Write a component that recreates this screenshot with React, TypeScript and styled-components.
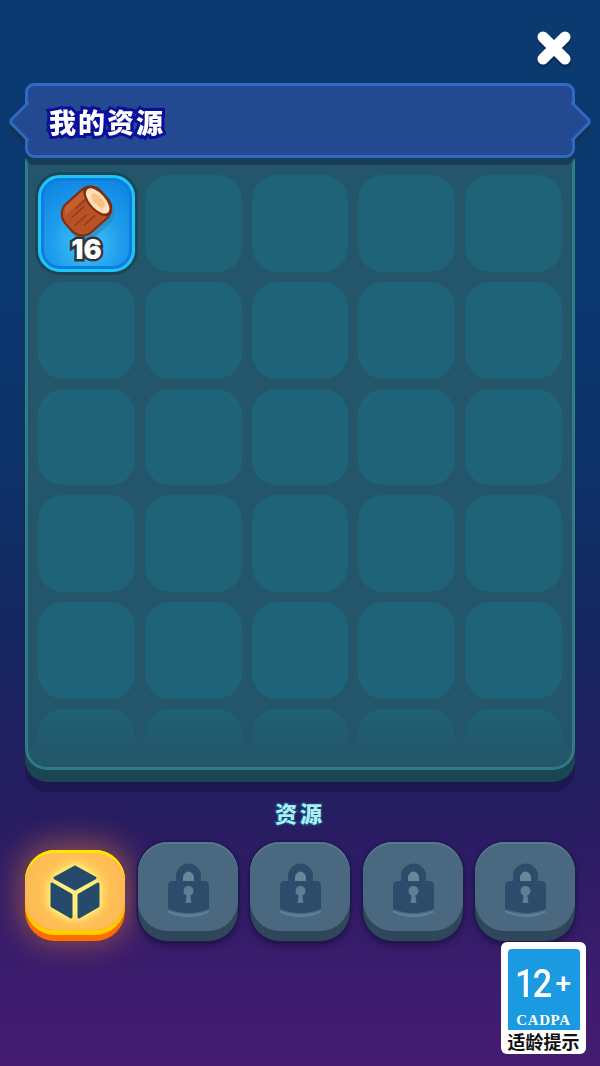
import React from "react";
import styled, { createGlobalStyle } from "styled-components";

const Global = createGlobalStyle`
  html, body { margin: 0; padding: 0; background: #1d1c5e; }
  * { box-sizing: border-box; }
`;

const CJK = `"Noto Sans CJK SC", "Noto Sans", sans-serif`;

const Screen = styled.div`
  position: relative;
  width: 600px;
  height: 1066px;
  overflow: hidden;
  display: flex;
  flex-direction: column;
  padding: 31px 25px 0;
  background: linear-gradient(180deg, #0a3a70 0%, #0a3970 25%, #0d3168 45%, #17255e 62%, #291c62 78%, #3a1c6c 90%, #441c72 100%);
`;

const TopBar = styled.div`
  display: flex;
  justify-content: flex-end;
  padding-right: 4px;
  height: 34px;
`;

const CloseIcon = styled.svg`
  width: 34px;
  height: 34px;
  overflow: visible;
  filter: drop-shadow(0 3px 0 #0b2a5a);
`;

const Banner = styled.div`
  position: relative;
  z-index: 2;
  height: 75px;
  margin-top: 18px;
  padding-left: 21px;
  display: flex;
  align-items: center;
  background: #234a90;
  border: 3px solid #2f6ac4;
  border-radius: 9px;
  filter: drop-shadow(0 7px 0 rgba(22, 50, 80, 0.72));

  &::before,
  &::after {
    content: "";
    position: absolute;
    top: 20.5px;
    width: 26px;
    height: 26px;
    background: #234a90;
    transform: rotate(45deg);
  }
  &::before {
    left: -15px;
    border-left: 3px solid #2f6ac4;
    border-bottom: 3px solid #2f6ac4;
    border-bottom-left-radius: 6px;
  }
  &::after {
    right: -15px;
    border-right: 3px solid #2f6ac4;
    border-top: 3px solid #2f6ac4;
    border-top-right-radius: 6px;
  }
`;

const Title = styled.h1`
  margin: 0;
  font: 900 27px/1 ${CJK};
  letter-spacing: 2px;
  color: #fff;
  -webkit-text-stroke: 6px #0a0f9c;
  paint-order: stroke fill;
  position: relative;
  top: 1px;
`;

const Panel = styled.section`
  position: relative;
  height: 624px;
  background: #1a4552;
  border-radius: 0 0 22px 22px;
  box-shadow: 0 10px 0 rgba(28, 22, 76, 0.75);
`;

const PanelFace = styled.div`
  position: relative;
  height: 612px;
  padding: 17px 10px 0;
  overflow: hidden;
  background: #23566a;
  border: 3px solid #2f7c82;
  border-top: 0;
  border-radius: 0 0 22px 22px;
`;

const Fade = styled.div`
  position: absolute;
  left: 0;
  right: 0;
  bottom: 0;
  height: 64px;
  background: linear-gradient(180deg, rgba(35, 86, 106, 0) 0%, rgba(35, 86, 106, 0.85) 68%, #23566a 100%);
`;

const Grid = styled.div`
  display: grid;
  grid-template-columns: repeat(5, 1fr);
  gap: 10px;
`;

const Slot = styled.div`
  position: relative;
  aspect-ratio: 1;
  border-radius: 25px;
  background: #1e6378;
`;

const FilledSlot = styled(Slot)`
  background: radial-gradient(circle at 50% 72%, #45c8f8 0%, #1f9cec 45%, #0b7fe0 100%);
  border: 3px solid #1ec6f6;
  border-radius: 22px;
  box-shadow: 0 0 0 3px #1c4558, inset 0 0 0 3px #0b7ce0;
`;

const LogIcon = styled.svg`
  position: absolute;
  left: -3px;
  top: -3px;
  width: 97px;
  height: 97px;
`;

const Count = styled.span`
  position: absolute;
  left: 0;
  right: 0;
  bottom: 6px;
  text-align: center;
  font: 900 27px/1 Inter, Roboto, sans-serif;
  color: #fff;
  -webkit-text-stroke: 5px #33343a;
  paint-order: stroke fill;
`;

const Label = styled.div`
  margin-top: 18px;
  height: 24px;
  text-align: center;
  font: 900 22px/24px ${CJK};
  letter-spacing: 3px;
  color: #a8f0f2;
  -webkit-text-stroke: 3px #1c3c78;
  paint-order: stroke fill;
`;

const Tabs = styled.div`
  margin-top: 18px;
  height: 99px;
  display: flex;
  justify-content: space-between;
  align-items: flex-end;
`;

const Tab = styled.button<{ $active?: boolean }>`
  width: 100px;
  height: ${(p) => (p.$active ? 91 : 99)}px;
  padding: 0;
  border: 0;
  display: flex;
  border-radius: 30px;
  background: ${(p) => (p.$active ? "#ff6c00" : "#30465a")};
  box-shadow: ${(p) =>
    p.$active
      ? "0 -3px 30px 6px rgba(255, 140, 50, 0.42)"
      : "0 0 0 1.5px #1d1a4c, 0 4px 6px rgba(15, 10, 50, 0.55)"};
`;

const TabFace = styled.span<{ $active?: boolean }>`
  flex: 1;
  height: ${(p) => (p.$active ? 80 : 89)}px;
  display: flex;
  align-items: center;
  justify-content: center;
  border-radius: 30px;
  ${(p) =>
    p.$active
      ? `background: radial-gradient(circle at 50% 50%, #ffd766 0%, #ffc057 55%, #ffb350 100%);
         box-shadow: inset 0 3px 0 #ffe600, 0 5px 0 #ffd000;`
      : `background: #4a6880; box-shadow: inset 0 2px 0 #577690;`}
`;

const CubeIcon = styled.svg`
  width: 52px;
  height: 58px;
  margin-top: 5px;
  filter: drop-shadow(0 0 5px #fff27a) drop-shadow(0 0 2px #fff27a);
`;

const LockIcon = styled.svg`
  width: 44px;
  height: 56px;
  margin-top: 8px;
`;

const AgeBadge = styled.aside`
  position: absolute;
  left: 501px;
  top: 942px;
  width: 85px;
  height: 112px;
  padding: 7px 6px 0;
  display: flex;
  flex-direction: column;
  align-items: center;
  background: #fff;
  border-radius: 6px;
`;

const AgeBlue = styled.div`
  width: 72px;
  height: 81px;
  flex: none;
  display: flex;
  flex-direction: column;
  align-items: center;
  background: #1a9ae0;
  border-radius: 4px 4px 0 0;
  color: #fff;
`;

const AgeNumber = styled.div`
  margin-top: 16px;
  height: 38px;
  align-self: flex-start;
  padding-left: 7px;
  display: flex;
  align-items: center;
  font: 500 38px/38px Roboto, sans-serif;
`;

const AgeDigits = styled.span`
  display: inline-block;
  width: 35px;
  letter-spacing: -2px;
  transform: scaleX(0.9);
  transform-origin: left center;
`;

const AgePlus = styled.span`
  font: 500 28px/28px Roboto, sans-serif;
  margin-left: 6px;
`;

const Cadpa = styled.div`
  margin-top: 9px;
  font: 700 15px/17px "Liberation Serif", serif;
  letter-spacing: 0.6px;
`;

const AgeCaption = styled.div`
  font: 700 18px/23px ${CJK};
  color: #111;
  white-space: nowrap;
`;

const Close = () => (
  <CloseIcon viewBox="0 0 34 34" aria-label="关闭">
    <path d="M6 6 L28 28 M28 6 L6 28" stroke="#fff" strokeWidth="11" strokeLinecap="round" />
  </CloseIcon>
);

const Log = () => (
  <LogIcon viewBox="0 0 97 97">
    <g transform="translate(48.5 36) rotate(-42)">
      <rect x="-26" y="-15" width="50" height="40" rx="15" fill="#2a88bc" opacity="0.7" />
      <rect x="-25" y="-20" width="50" height="40" rx="15" fill="#7c2c10" />
      <rect x="-23" y="-18" width="46" height="36" rx="13" fill="#ba5026" />
      <path d="M-14 -17 H12 V-11 H-19 Z" fill="#c85f2e" />
      <path d="M-15 -5 H1 M-18 3 H-3 M-11 9 H3 M-6 -9 H6" stroke="#93391a" strokeWidth="1.4" strokeLinecap="round" />
      <ellipse cx="15" cy="0" rx="9.5" ry="18.5" fill="#7c2c10" />
      <ellipse cx="15" cy="0" rx="7.5" ry="15.5" fill="#fde0b8" />
      <ellipse cx="15.5" cy="0" rx="4" ry="9" fill="#f9c082" />
    </g>
  </LogIcon>
);

const Cube = () => (
  <CubeIcon viewBox="0 0 52 58">
    <g fill="#254a6c" stroke="#254a6c" strokeWidth="3" strokeLinejoin="round">
      <path d="M26 3 L46 14 L26 25 L6 14 Z" />
      <path d="M3 20 L22 31 V53 L3 42 Z" />
      <path d="M49 20 L30 31 V53 L49 42 Z" />
    </g>
  </CubeIcon>
);

const Lock = () => (
  <LockIcon viewBox="0 0 44 56">
    <path d="M10 20 V13 a12.5 12.5 0 0 1 25 0 V20 Z" fill="#2b4d6b" />
    <path d="M17 18 V15 a5.5 6.5 0 0 1 11 0 V18 Z" fill="#6a869b" />
    <path d="M2 23 q0 -5 5 -5 H38 q5 0 5 5 V46 Q22.5 54 2 46 Z" fill="#2b4d6b" />
    <path d="M2 47.5 Q22.5 55 43 47.5 V49.5 Q22.5 59 2 49.5 Z" fill="#5f7d94" />
    <circle cx="22.5" cy="28" r="5" fill="#5f7d94" />
    <path d="M21 30 H24 L25.5 40 H19.5 Z" fill="#5f7d94" />
  </LockIcon>
);

export default function App() {
  return (
    <Screen>
      <Global />
      <TopBar>
        <Close />
      </TopBar>
      <Banner>
        <Title>我的资源</Title>
      </Banner>
      <Panel>
        <PanelFace>
          <Grid>
            <FilledSlot>
              <Log />
              <Count>16</Count>
            </FilledSlot>
            {Array.from({ length: 29 }, (_, i) => (
              <Slot key={i} />
            ))}
          </Grid>
          <Fade />
        </PanelFace>
      </Panel>
      <Label>资源</Label>
      <Tabs>
        <Tab $active>
          <TabFace $active>
            <Cube />
          </TabFace>
        </Tab>
        {[0, 1, 2, 3].map((i) => (
          <Tab key={i}>
            <TabFace>
              <Lock />
            </TabFace>
          </Tab>
        ))}
      </Tabs>
      <AgeBadge>
        <AgeBlue>
          <AgeNumber>
            <AgeDigits>12</AgeDigits>
            <AgePlus>+</AgePlus>
          </AgeNumber>
          <Cadpa>CADPA</Cadpa>
        </AgeBlue>
        <AgeCaption>适龄提示</AgeCaption>
      </AgeBadge>
    </Screen>
  );
}
